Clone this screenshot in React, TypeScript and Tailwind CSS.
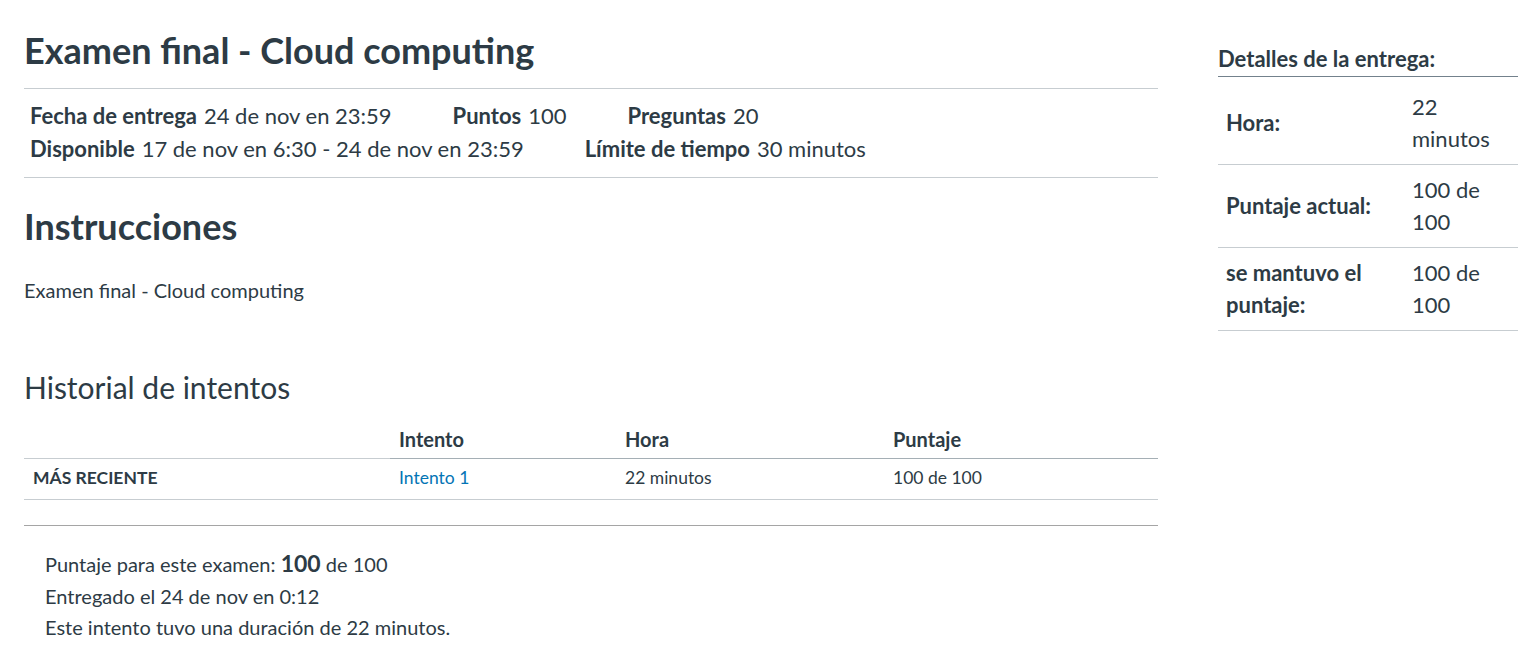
import React from 'react'

const detailsRows = [
  { label: 'Hora:', value: '22 minutos' },
  { label: 'Puntaje actual:', value: '100 de 100' },
  { label: 'se mantuvo el puntaje:', value: '100 de 100' },
]

const Meta = ({ label, value }: { label: string; value: string }) => (
  <span className='mr-[61px]'>
    <span className='font-bold mr-[7px]'>{label}</span>
    {value}
  </span>
)

export default function App() {
  return (
    <div className='min-h-screen bg-white text-[#2D3B45] font-["Lato","Liberation_Sans",sans-serif]'>
      <div className='flex gap-[60px] px-6 pt-[28px]'>
        {/* main column */}
        <div className='w-[1134px] shrink-0'>
          <h1 className='text-[36px] font-bold leading-[45px]'>Examen final - Cloud computing</h1>

          <div className='mt-[15px] border-y border-[#C7CDD1] px-[6px] pt-[10px] pb-[12px] text-[22px] leading-[33px]'>
            <div>
              <Meta label='Fecha de entrega' value='24 de nov en 23:59' />
              <Meta label='Puntos' value='100' />
              <Meta label='Preguntas' value='20' />
            </div>
            <div>
              <Meta label='Disponible' value='17 de nov en 6:30 - 24 de nov en 23:59' />
              <Meta label='Límite de tiempo' value='30 minutos' />
            </div>
          </div>

          <h2 className='mt-[26px] text-[36px] font-bold leading-[44px]'>Instrucciones</h2>
          <p className='mt-[29px] text-[20px] leading-[26px]'>Examen final - Cloud computing</p>

          <h3 className='mt-[66px] text-[30px] leading-[36px]'>Historial de intentos</h3>

          <table className='mt-[15px] w-full border-collapse text-left text-[17.5px]'>
            <thead>
              <tr className='text-[20px] leading-[24px]'>
                <th className='w-[366px] border-b border-[#C7CDD1] px-[9px] py-[7px]'></th>
                <th className='w-[226px] border-b border-[#A5AFB5] px-[9px] py-[7px] font-bold'>Intento</th>
                <th className='w-[268px] border-b border-[#A5AFB5] px-[9px] py-[7px] font-bold'>Hora</th>
                <th className='border-b border-[#A5AFB5] px-[9px] py-[7px] font-bold'>Puntaje</th>
              </tr>
            </thead>
            <tbody>
              <tr className='leading-[24px]'>
                <td className='border-b border-[#C7CDD1] px-[9px] pt-[7px] pb-[9px] font-bold uppercase'>Más reciente</td>
                <td className='border-b border-[#C7CDD1] px-[9px] pt-[7px] pb-[9px]'>
                  <a href='#' className='text-[#0374B5]'>Intento 1</a>
                </td>
                <td className='border-b border-[#C7CDD1] px-[9px] pt-[7px] pb-[9px]'>22 minutos</td>
                <td className='border-b border-[#C7CDD1] px-[9px] pt-[7px] pb-[9px]'>100 de 100</td>
              </tr>
            </tbody>
          </table>

          <div className='mt-[25px] border-t border-[#A5A5A5] pl-[21px] pt-[22px] text-[20px] leading-[31.5px]'>
            <div>
              Puntaje para este examen: <span className='text-[23px] font-bold'>100</span> de 100
            </div>
            <div>Entregado el 24 de nov en 0:12</div>
            <div>Este intento tuvo una duración de 22 minutos.</div>
          </div>
        </div>

        {/* sidebar */}
        <aside className='w-[300px] shrink-0 pt-[18px]'>
          <h3 className='border-b border-[#73818C] pb-[4px] text-[22px] font-bold leading-[26px]'>Detalles de la entrega:</h3>
          <table className='mt-[5px] w-full border-collapse text-[22px] leading-[32px]'>
            <tbody>
              {detailsRows.map((row) => (
                <tr key={row.label} className='border-b border-[#C7CDD1]'>
                  <th className='w-[186px] px-2 py-[9px] text-left align-middle font-bold'>{row.label}</th>
                  <td className='px-2 py-[9px]'>{row.value}</td>
                </tr>
              ))}
            </tbody>
          </table>
        </aside>
      </div>
    </div>
  )
}
